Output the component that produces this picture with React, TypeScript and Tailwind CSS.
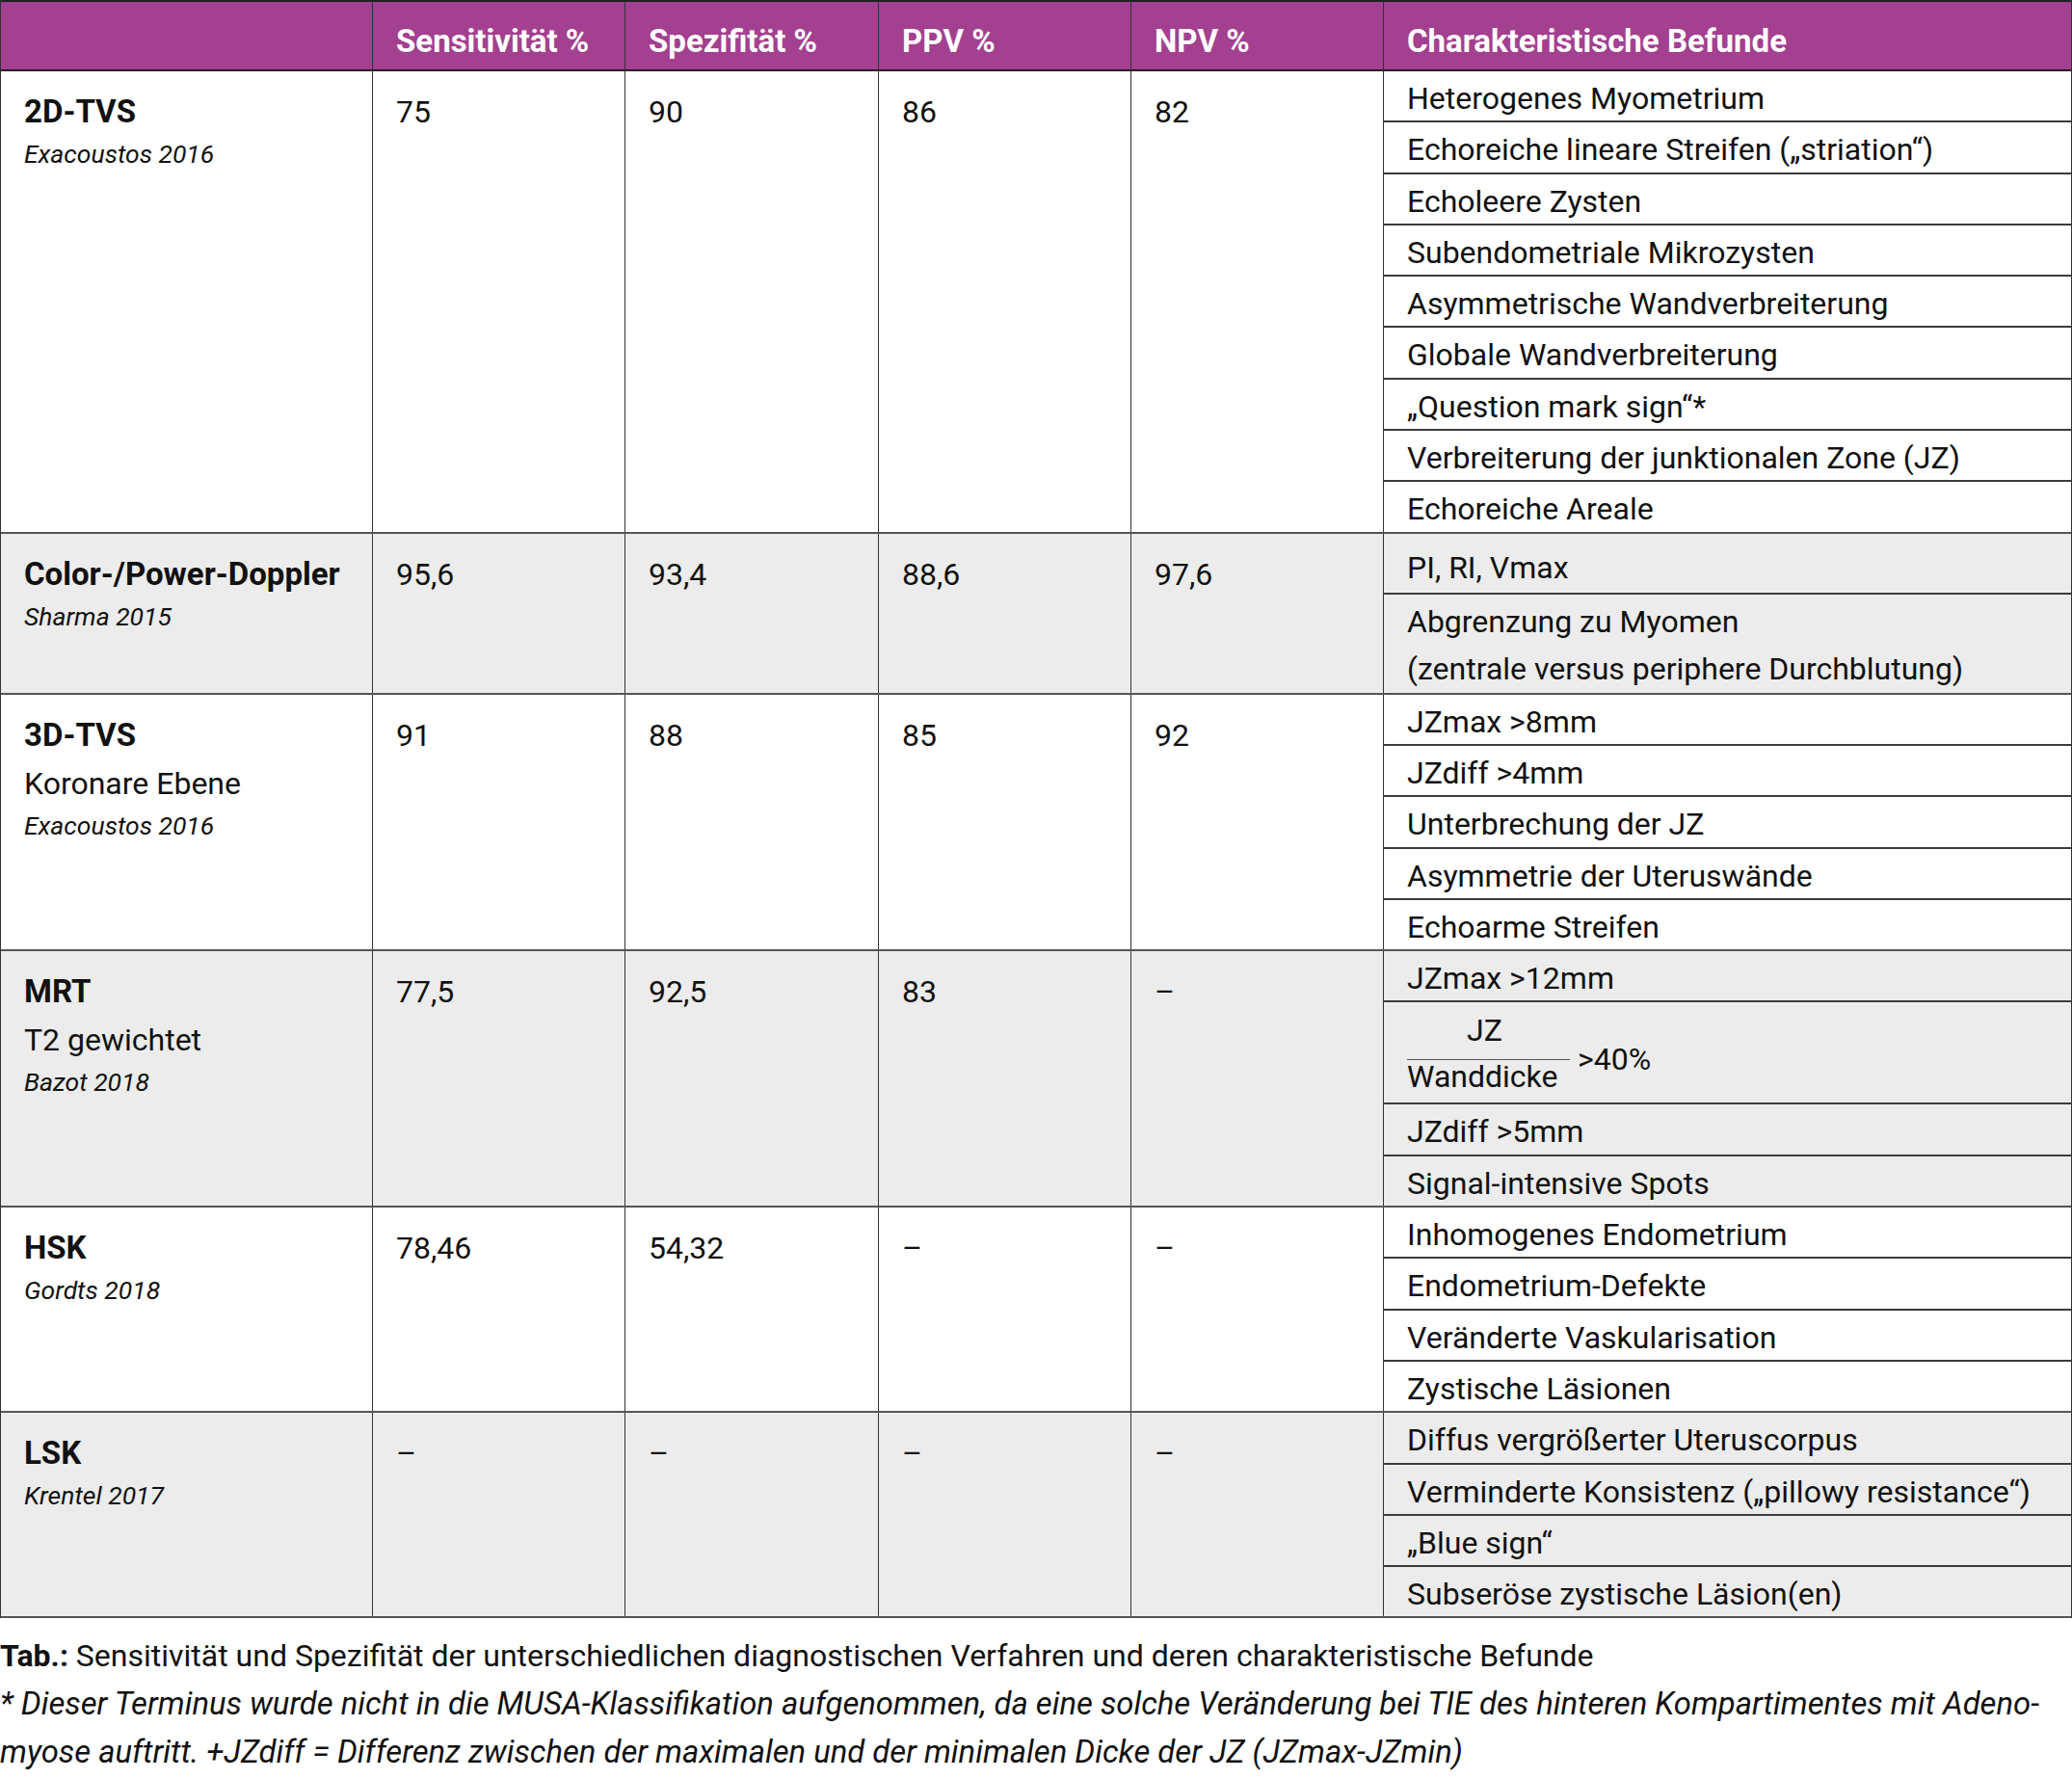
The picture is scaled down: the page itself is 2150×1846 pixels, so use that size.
import React from "react";

type RowData = {
  title: string;
  sub?: string;
  cite: string;
  vals: string[];
  gray?: boolean;
  findings: React.ReactNode;
};

const GRID = "grid grid-cols-[386px_262px_263px_262px_262px_1fr]";

function Sub({ children, first, className = "" }: { children: React.ReactNode; first?: boolean; className?: string }) {
  return (
    <div
      className={`pl-[24px] pt-[6px] text-[32px] leading-[45.3px] whitespace-nowrap ${first ? "" : "border-t-2 border-[#3c3c3c]"} ${className}`}
    >
      {children}
    </div>
  );
}

function List({ items }: { items: string[] }) {
  return (
    <>
      {items.map((t, i) => (
        <Sub key={i} first={i === 0}>
          {t}
        </Sub>
      ))}
    </>
  );
}

const rows: RowData[] = [
  {
    title: "2D-TVS",
    cite: "Exacoustos 2016",
    vals: ["75", "90", "86", "82"],
    findings: (
      <List
        items={[
          "Heterogenes Myometrium",
          "Echoreiche lineare Streifen („striation“)",
          "Echoleere Zysten",
          "Subendometriale Mikrozysten",
          "Asymmetrische Wandverbreiterung",
          "Globale Wandverbreiterung",
          "„Question mark sign“*",
          "Verbreiterung der junktionalen Zone (JZ)",
          "Echoreiche Areale",
        ]}
      />
    ),
  },
  {
    title: "Color-/Power-Doppler",
    cite: "Sharma 2015",
    vals: ["95,6", "93,4", "88,6", "97,6"],
    gray: true,
    findings: (
      <>
        <div className="pl-[24px] pt-[10px] h-[61px] text-[32px] leading-[50px] whitespace-nowrap">PI, RI, Vmax</div>
        <div className="pl-[24px] pt-[4px] border-t-2 border-[#3c3c3c] text-[32px] leading-[49px] whitespace-nowrap">
          Abgrenzung zu Myomen
          <br />
          (zentrale versus periphere Durchblutung)
        </div>
      </>
    ),
  },
  {
    title: "3D-TVS",
    sub: "Koronare Ebene",
    cite: "Exacoustos 2016",
    vals: ["91", "88", "85", "92"],
    findings: (
      <List
        items={["JZmax >8mm", "JZdiff >4mm", "Unterbrechung der JZ", "Asymmetrie der Uteruswände", "Echoarme Streifen"]}
      />
    ),
  },
  {
    title: "MRT",
    sub: "T2 gewichtet",
    cite: "Bazot 2018",
    vals: ["77,5", "92,5", "83", "–"],
    gray: true,
    findings: (
      <>
        <Sub first>JZmax &gt;12mm</Sub>
        <div className="pl-[24px] border-t-2 border-[#3c3c3c] h-[106px] flex items-start text-[32px] whitespace-nowrap">
          <div className="flex flex-col w-[169px] pt-[4px]">
            <div className="text-center leading-[50px] pr-[8px]">JZ</div>
            <div className="mt-[5px] border-t border-[#555]" />
            <div className="leading-[34px]">Wanddicke</div>
          </div>
          <div className="ml-[8px] pt-[34px] leading-[50px]">&gt;40%</div>
        </div>
        <Sub>JZdiff &gt;5mm</Sub>
        <Sub>Signal-intensive Spots</Sub>
      </>
    ),
  },
  {
    title: "HSK",
    cite: "Gordts 2018",
    vals: ["78,46", "54,32", "–", "–"],
    findings: (
      <List
        items={["Inhomogenes Endometrium", "Endometrium-Defekte", "Veränderte Vaskularisation", "Zystische Läsionen"]}
      />
    ),
  },
  {
    title: "LSK",
    cite: "Krentel 2017",
    vals: ["–", "–", "–", "–"],
    gray: true,
    findings: (
      <List
        items={[
          "Diffus vergrößerter Uteruscorpus",
          "Verminderte Konsistenz („pillowy resistance“)",
          "„Blue sign“",
          "Subseröse zystische Läsion(en)",
        ]}
      />
    ),
  },
];

const headers = ["", "Sensitivität %", "Spezifität %", "PPV %", "NPV %", "Charakteristische Befunde"];

export default function App() {
  return (
    <div className="w-[2150px] min-h-[1846px] bg-white text-[#111] font-[Roboto,sans-serif]">
      <div className="border-x border-[#333]">
        <div className={`${GRID} bg-[#a3408f] h-[74px] border-t-2 border-b-2 border-[#222]`}>
          {headers.map((h, i) => (
            <div
              key={i}
              className={`flex items-center pt-[12px] pl-[24px] text-white font-bold text-[33px] whitespace-nowrap ${i < 5 ? "border-r border-[#333]" : ""}`}
            >
              {h}
            </div>
          ))}
        </div>
        {rows.map((r, ri) => (
          <div key={ri} className={`${GRID} border-b-2 border-[#555] ${r.gray ? "bg-[#ebeceb]" : "bg-white"}`}>
            <div className="pl-[24px] pt-[17px] border-r border-[#333] whitespace-nowrap">
              <div className="font-bold text-[33px] leading-[50px]">{r.title}</div>
              {r.sub && <div className="text-[32px] leading-[50px]">{r.sub}</div>}
              <div className="italic text-[26.5px] leading-[38px]">{r.cite}</div>
            </div>
            {r.vals.map((v, vi) => (
              <div key={vi} className="pl-[24px] pt-[17px] border-r border-[#333] text-[32px] leading-[50px]">
                {v}
              </div>
            ))}
            <div className="flex flex-col">{r.findings}</div>
          </div>
        ))}
      </div>
      <div className="mt-[14px] leading-[50px] whitespace-nowrap">
        <div className="text-[32px]">
          <span className="font-bold">Tab.:</span> Sensitivität und Spezifität der unterschiedlichen diagnostischen Verfahren und
          deren charakteristische Befunde
        </div>
        <div className="italic text-[32.8px]">
          * Dieser Terminus wurde nicht in die MUSA-Klassifikation aufgenommen, da eine solche Veränderung bei TIE des hinteren
          Kompartimentes mit Adeno-
          <br />
          myose auftritt. +JZdiff = Differenz zwischen der maximalen und der minimalen Dicke der JZ (JZmax-JZmin)
        </div>
      </div>
    </div>
  );
}
